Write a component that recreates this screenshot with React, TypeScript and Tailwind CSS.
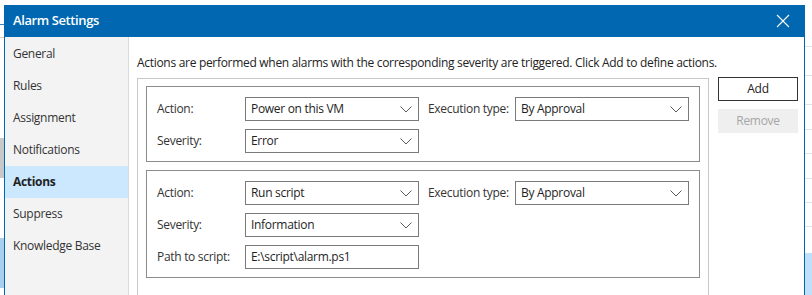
import React from 'react';

const font = { fontFamily: '"Open Sans", "Liberation Sans", sans-serif' };

const navItems = ['General', 'Rules', 'Assignment', 'Notifications', 'Actions', 'Suppress', 'Knowledge Base'];

const Chevron = () => (
  <svg width="12" height="7" viewBox="0 0 12 7" className="shrink-0">
    <path d="M0.5 0.5 L6 6 L11.5 0.5" fill="none" stroke="#5a5a5a" strokeWidth="1" />
  </svg>
);

const Select = ({ value }: { value: string }) => (
  <div className="flex h-[24px] w-[174px] items-center justify-between border border-[#7a7a7a] bg-white pl-[5px] pr-[6px] text-[12px] text-[#1e1e1e]">
    <span>{value}</span>
    <Chevron />
  </div>
);

const TextBox = ({ value }: { value: string }) => (
  <div className="flex h-[24px] w-[174px] items-center border border-[#7a7a7a] bg-white px-[5px] text-[12px] text-[#1e1e1e]">
    {value}
  </div>
);

const Row = ({ label, children }: { label: string; children: React.ReactNode }) => (
  <div className="flex items-center">
    <div className="w-[88px] text-[12px] text-[#333]">{label}</div>
    {children}
  </div>
);

type ActionCard = { action: string; exec: string; severity: string; path?: string };

const cards: ActionCard[] = [
  { action: 'Power on this VM', exec: 'By Approval', severity: 'Error' },
  { action: 'Run script', exec: 'By Approval', severity: 'Information', path: 'E:\\script\\alarm.ps1' },
];

const Card = ({ c }: { c: ActionCard }) => (
  <div className="flex flex-col gap-[8px] border border-[#8c8c8c] pb-[8px] pl-[10px] pt-[10px]">
    <div className="flex items-center">
      <Row label="Action:">
        <Select value={c.action} />
      </Row>
      <div className="ml-[9px] w-[87px] text-[12px] text-[#333]">Execution type:</div>
      <Select value={c.exec} />
    </div>
    <Row label="Severity:">
      <Select value={c.severity} />
    </Row>
    {c.path && (
      <Row label="Path to script:">
        <TextBox value={c.path} />
      </Row>
    )}
  </div>
);

export default function App() {
  return (
    <div className="flex h-[295px] w-[812px] flex-col overflow-hidden bg-white tracking-[-0.3px]" style={font}>
      <div className="h-[5px] shrink-0 bg-white" />
      <div className="flex min-h-0 flex-1">
        {/* background app, left edge */}
        <div className="flex w-[4px] shrink-0 flex-col bg-white">
          <div className="mt-[19px] h-[1px] bg-[#3b7fc4]" />
          <div className="mt-[12px] h-[1px] bg-[#d0d0d0]" />
          <div className="mt-[100px] h-[40px] bg-[#c8c8c8]" />
          <div className="mt-[60px] h-[50px] bg-[#a9cfee]" />
        </div>

        {/* dialog */}
        <div className="flex w-[801px] shrink-0 flex-col border-x border-[#0067b0]">
          <div className="flex h-[32px] shrink-0 items-center justify-between bg-[#0067b0] pl-[8px] pr-[14px]">
            <span className="text-[13px] font-semibold tracking-[-0.4px] text-white">Alarm Settings</span>
            <svg width="14" height="14" viewBox="0 0 14 14">
              <path d="M1 1 L13 13 M13 1 L1 13" stroke="white" strokeWidth="1.1" />
            </svg>
          </div>
          <div className="flex min-h-0 flex-1">
            <div className="flex w-[124px] shrink-0 flex-col border-r border-[#dadada] bg-[#f3f3f3] pt-[1px]">
              {navItems.map((n) => (
                <div
                  key={n}
                  className={`flex h-[32px] items-center pl-[8px] text-[12px] ${
                    n === 'Actions' ? 'bg-[#cce8ff] font-bold text-[#222]' : 'text-[#333]'
                  }`}
                >
                  {n}
                </div>
              ))}
            </div>
            <div className="flex min-w-0 flex-1 flex-col pl-[8px]">
              <div className="mt-[17px] h-[18px] text-[12px] leading-[18px] text-[#222]">
                Actions are performed when alarms with the corresponding severity are triggered. Click Add to define actions.
              </div>
              <div className="mt-[6px] flex flex-1 gap-[9px]">
                <div className="flex w-[572px] flex-col gap-[8px] border-l border-r border-t border-[#c8c8c8] px-[8px] pt-[7px]">
                  {cards.map((c, i) => (
                    <Card key={i} c={c} />
                  ))}
                </div>
                <div className="flex flex-col gap-[8px]">
                  <button className="-mt-[1px] h-[24px] w-[80px] border border-[#333] bg-white text-[12px] text-[#222]">Add</button>
                  <button className="h-[24px] w-[80px] bg-[#efefef] text-[12px] text-[#a6a6a6]">Remove</button>
                </div>
              </div>
            </div>
          </div>
        </div>

        {/* background app, right edge */}
        <div className="flex flex-1 flex-col bg-white">
          <div className="mt-[41px] h-[1px] bg-[#e2e2e2]" />
          <div className="mt-[28px] h-[1px] bg-[#e2e2e2]" />
          <div className="mt-[28px] h-[1px] bg-[#e2e2e2]" />
          <div className="mt-[24px] h-[1px] bg-[#e2e2e2]" />
          <div className="mt-[23px] h-[1px] bg-[#e2e2e2]" />
          <div className="mt-[24px] h-[1px] bg-[#e2e2e2]" />
          <div className="mt-[23px] h-[1px] bg-[#e2e2e2]" />
          <div className="mt-[23px] h-[1px] bg-[#e2e2e2]" />
          <div className="mt-[26px] flex-1 bg-[#bfe0fb]" />
        </div>
      </div>
    </div>
  );
}
